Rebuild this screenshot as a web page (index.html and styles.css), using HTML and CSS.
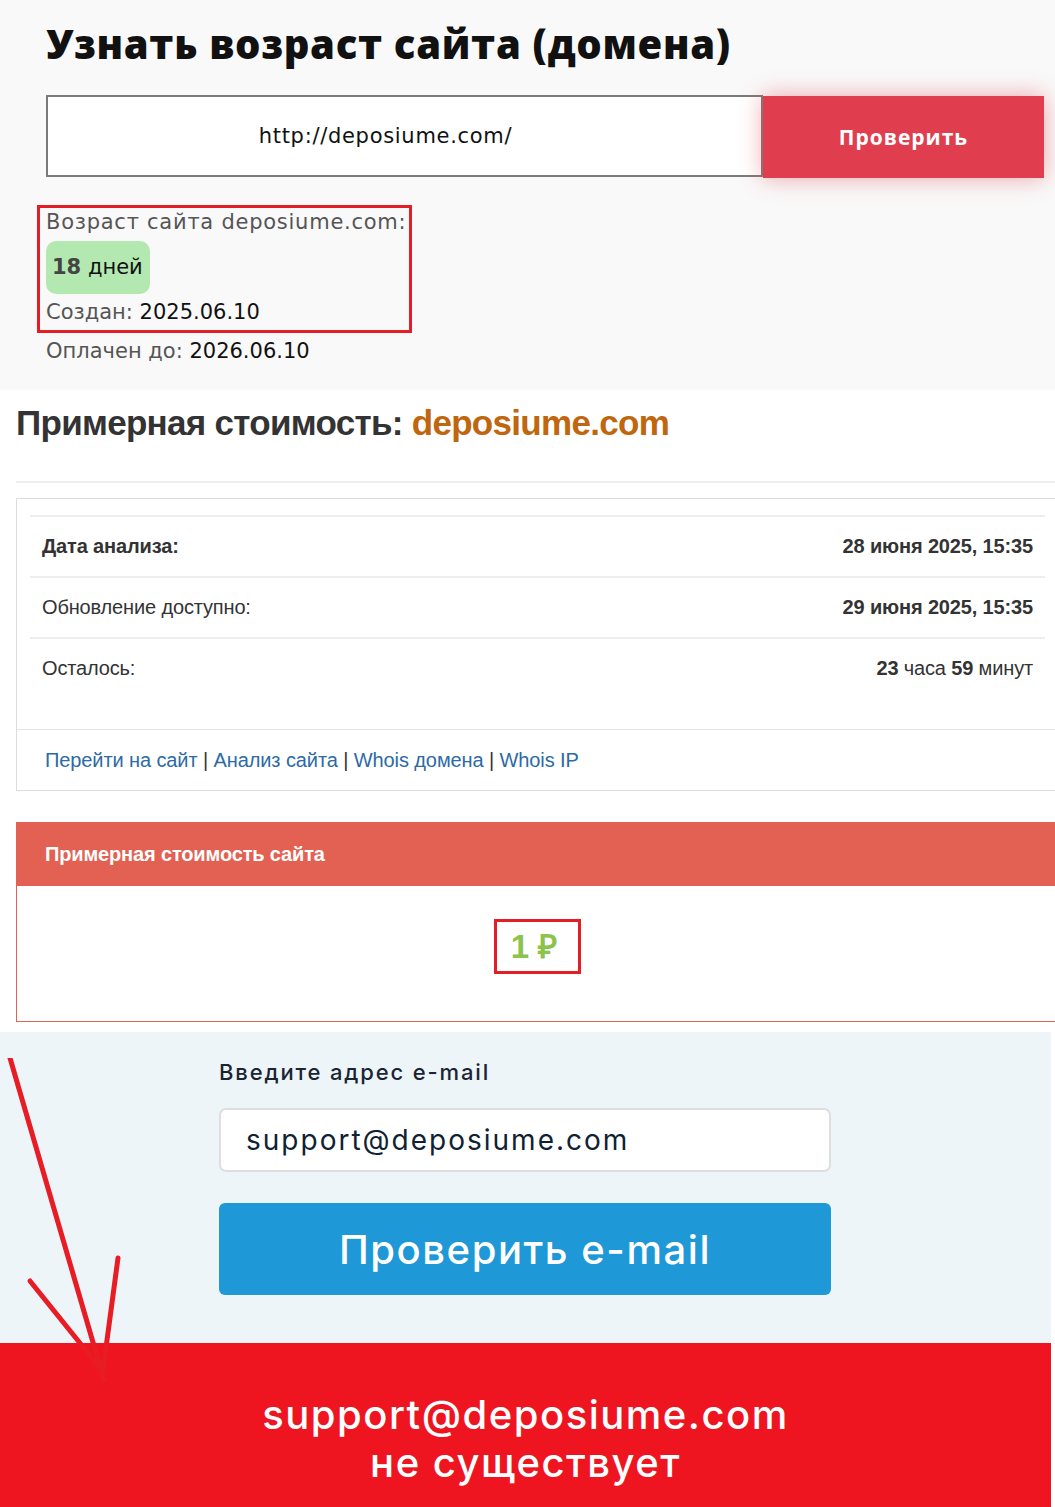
FILE: index.html
```html
<!DOCTYPE html>
<html lang="ru">
<head>
<meta charset="utf-8">
<title>Узнать возраст сайта</title>
<link rel="stylesheet" href="styles.css">
</head>
<body>
<div class="page">
  <section class="age">
    <h1 class="age-title">Узнать возраст сайта (домена)</h1>
    <div class="checker">
      <div class="checker-input">http://deposiume.com/</div>
      <div class="checker-btn">Проверить</div>
    </div>
    <div class="age-result">
      <div class="age-line first">Возраст сайта deposiume.com:</div>
      <div class="age-badge"><b>18</b> дней</div>
      <div class="age-line created">Создан: <span class="val">2025.06.10</span></div>
    </div>
    <div class="age-line paid">Оплачен до: <span class="val">2026.06.10</span></div>
  </section>

  <section class="cost">
    <h2 class="cost-title">Примерная стоимость: <span class="domain">deposiume.com</span></h2>
    <div class="rule"></div>
    <div class="panel">
      <div class="panel-body">
        <div class="row"><span class="lbl strong">Дата анализа:</span><span class="v strong">28 июня 2025, 15:35</span></div>
        <div class="row"><span class="lbl">Обновление доступно:</span><span class="v strong">29 июня 2025, 15:35</span></div>
        <div class="row"><span class="lbl">Осталось:</span><span class="v"><b>23</b> часа <b>59</b> минут</span></div>
      </div>
      <div class="panel-foot">
        <a>Перейти на сайт</a> | <a>Анализ сайта</a> | <a>Whois домена</a> | <a>Whois IP</a>
      </div>
    </div>
    <div class="price">
      <div class="price-head">Примерная стоимость сайта</div>
      <div class="price-body"><span class="price-val">1 ₽</span></div>
    </div>
  </section>

  <section class="mail">
    <div class="mail-form">
      <div class="mail-label">Введите адрес e-mail</div>
      <div class="mail-input">support@deposiume.com</div>
      <div class="mail-btn">Проверить e-mail</div>
    </div>
  </section>

  <section class="result">
    <div>support@deposiume.com</div>
    <div>не существует</div>
  </section>

  <svg class="arrow" width="140" height="360" viewBox="0 0 140 360">
    <path d="M10 0 L104 322" />
    <path d="M30 223 L100 310" />
    <path d="M118 200 L103 312" />
  </svg>
</div>
</body>
</html>
```

FILE: styles.css
```css
html, body {
  margin: 0;
  padding: 0;
  background: #ffffff;
}
.page {
  position: relative;
  width: 1055px;
  overflow: hidden;
}
.age {
  background: #f9f9f9;
  padding: 18px 0 23px 46px;
  font-family: "DejaVu Sans", "Open Sans", sans-serif;
}
.age-title {
  margin: 0 0 25px 0;
  font-family: "Open Sans", "Noto Sans", sans-serif;
  font-size: 40px;
  font-weight: 800;
  color: #111;
  line-height: 52px;
  letter-spacing: 0.7px;
}
.checker {
  display: flex;
  align-items: flex-start;
  margin-bottom: 27px;
}
.checker-input {
  box-sizing: border-box;
  width: 717px;
  height: 82px;
  border: 2px solid #7b7b7b;
  background: #fff;
  display: flex;
  align-items: center;
  justify-content: center;
  padding-right: 38px;
  font-size: 21px;
  letter-spacing: 0.7px;
  color: #111;
}
.checker-btn {
  width: 281px;
  height: 82px;
  margin-top: 1px;
  background: #e03e4e;
  box-shadow: 0 0 22px rgba(224, 62, 78, 0.45);
  color: #fff;
  font-family: "Open Sans", "Noto Sans", sans-serif;
  font-weight: 700;
  font-size: 21px;
  letter-spacing: 1px;
  display: flex;
  align-items: center;
  justify-content: center;
}
.age-result {
  display: inline-block;
  margin-left: -9px;
  border: 3px solid #e31e26;
  padding: 0 3px 2px 6px;
}
.age-line {
  font-size: 21px;
  color: #555;
  line-height: 32px;
}
.age-line.first {
  line-height: 28px;
  letter-spacing: 0.75px;
}
.age-line.created {
  margin-top: 2px;
}
.age-line .val {
  color: #111;
}
.age-badge {
  display: inline-block;
  background: #b3e9b0;
  border-radius: 10px;
  padding: 0 7px 0 6px;
  height: 53px;
  line-height: 53px;
  font-size: 21px;
  color: #111;
  margin-top: 5px;
}
.age-badge b {
  color: #444;
}
.paid {
  margin-top: 2px;
}

.cost {
  font-family: "Liberation Sans", Arial, sans-serif;
  color: #333;
}
.cost-title {
  margin: 0;
  padding: 12px 0 0 16px;
  font-size: 35px;
  font-weight: 700;
  line-height: 42px;
  letter-spacing: -0.7px;
  color: #333;
}
.cost-title .domain {
  color: #c0660e;
}
.rule {
  margin: 37px 0 0 16px;
  border-top: 2px solid #eeeeee;
}
.panel {
  margin: 15px -2px 0 16px;
  border: 1px solid #dddddd;
}
.panel-body {
  padding: 16px 11px 31px 13px;
}
.row {
  box-sizing: border-box;
  display: flex;
  justify-content: space-between;
  align-items: center;
  height: 61px;
  padding: 0 12px;
  border-top: 2px solid #eeeeee;
  font-size: 20px;
  letter-spacing: -0.15px;
  color: #333;
}
.strong {
  font-weight: 700;
}
.panel-foot {
  border-top: 1px solid #e4e4e4;
  height: 60px;
  display: flex;
  align-items: center;
  padding-left: 28px;
  font-size: 20px;
  letter-spacing: -0.1px;
  color: #333;
  white-space: pre;
}
.panel-foot a {
  color: #2d6aa6;
}
.price {
  margin: 31px -2px 0 16px;
  border: 1px solid #e36152;
}
.price-head {
  background: #e36152;
  height: 63px;
  display: flex;
  align-items: center;
  padding-left: 28px;
  color: #fff;
  font-weight: 700;
  font-size: 20px;
  letter-spacing: -0.15px;
}
.price-body {
  height: 135px;
  display: flex;
  justify-content: center;
  align-items: flex-start;
}
.price-val {
  margin-top: 33px;
  margin-left: 2px;
  border: 3px solid #e31e26;
  padding: 0 21px 0 14px;
  height: 49px;
  line-height: 49px;
  font-size: 33px;
  font-weight: 700;
  color: #8cc34b;
}

.mail {
  margin-top: 10px;
  width: 1051px;
  background: #eef5f9;
  height: 311px;
  font-family: Inter, "DejaVu Sans", sans-serif;
}
.mail-form {
  margin-left: 219px;
  width: 612px;
  padding-top: 26px;
}
.mail-label {
  font-size: 22px;
  font-weight: 500;
  color: #1a2533;
  line-height: 28px;
  letter-spacing: 1.85px;
}
.mail-input {
  box-sizing: border-box;
  margin-top: 22px;
  height: 64px;
  background: #fff;
  border: 2px solid #dedede;
  border-radius: 7px;
  padding-left: 25px;
  display: flex;
  align-items: center;
  font-size: 28px;
  letter-spacing: 2px;
  color: #0e2233;
}
.mail-btn {
  margin-top: 31px;
  height: 92px;
  background: #1e98d6;
  border-radius: 6px;
  color: #fff;
  font-size: 40px;
  font-weight: 500;
  letter-spacing: 1.55px;
  display: flex;
  align-items: center;
  justify-content: center;
}
.result {
  width: 1051px;
  height: 164px;
  background: #ee1520;
  color: #fff;
  font-family: Inter, "DejaVu Sans", sans-serif;
  font-size: 40px;
  font-weight: 500;
  letter-spacing: 1.5px;
  text-align: center;
  line-height: 48px;
  box-sizing: border-box;
  padding-top: 48px;
}
.arrow {
  position: absolute;
  left: 0;
  top: 1058px;
}
.arrow path {
  stroke: #e81c24;
  stroke-width: 5;
  stroke-linecap: round;
  fill: none;
}
```
